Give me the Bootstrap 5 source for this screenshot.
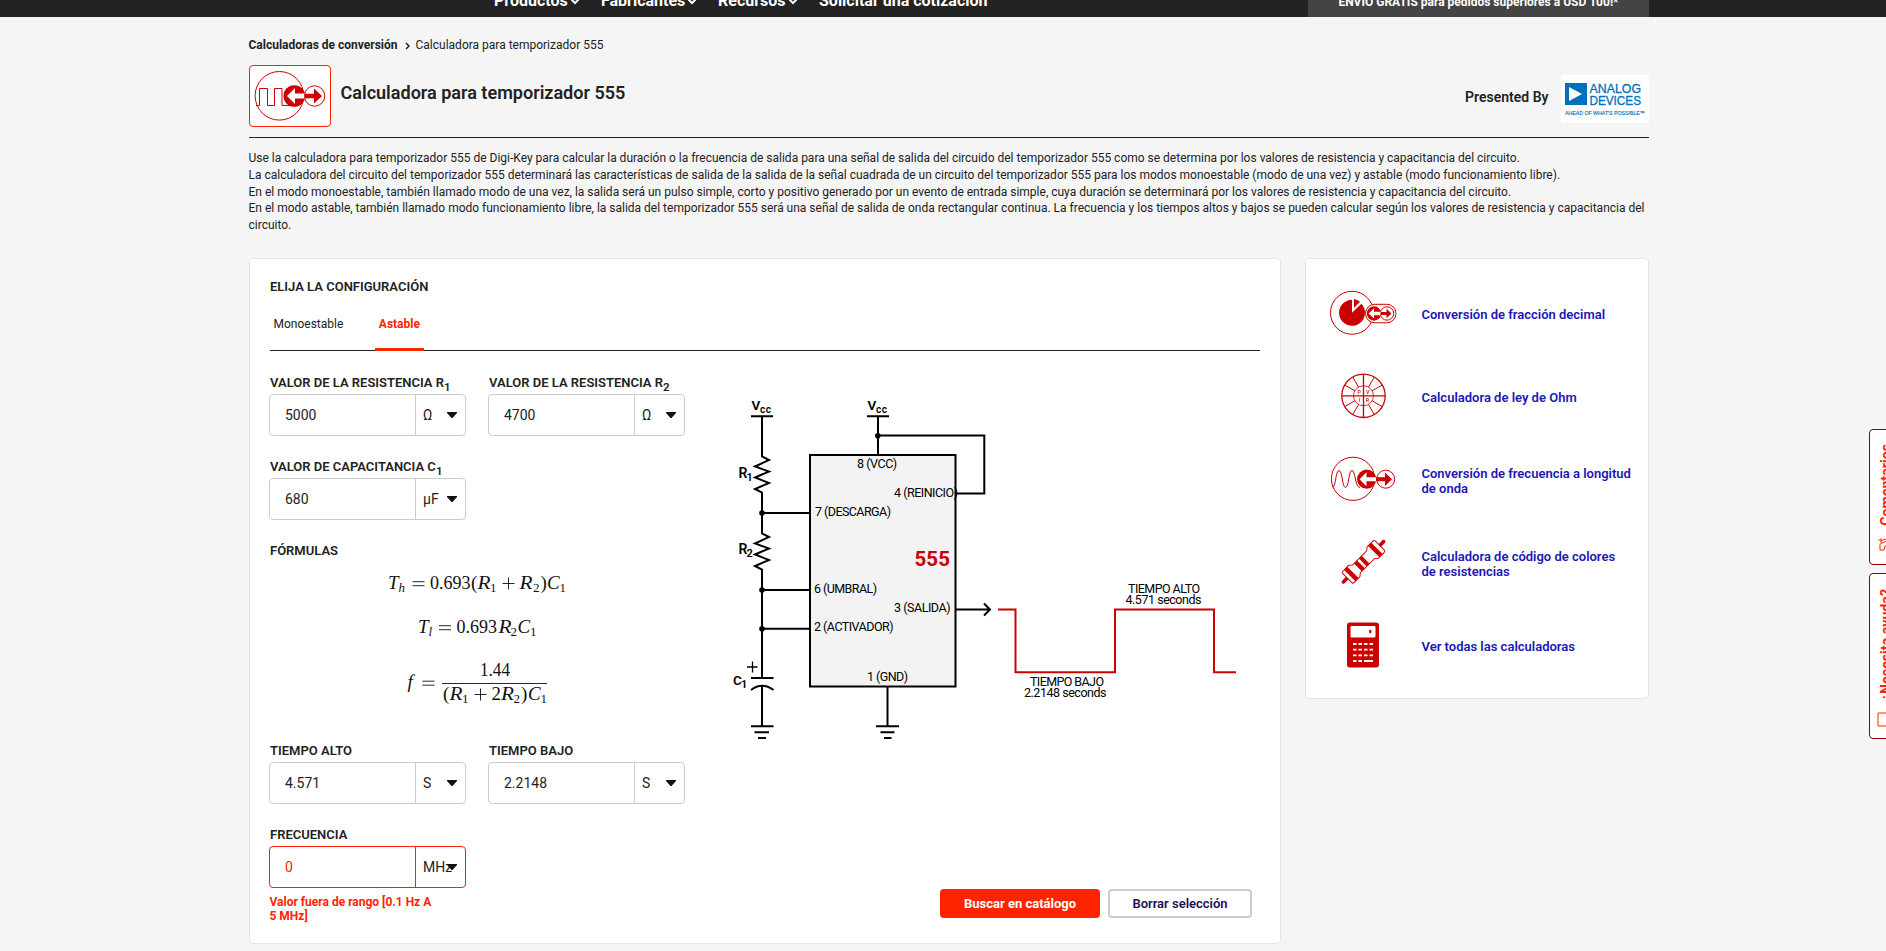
<!DOCTYPE html>
<html lang="es">
<head>
<meta charset="utf-8">
<meta name="viewport" content="width=device-width, initial-scale=1">
<title>Calculadora para temporizador 555</title>
<link href="https://cdn.jsdelivr.net/npm/bootstrap@5.3.0/dist/css/bootstrap.min.css" rel="stylesheet">
<style>
:root{--dk-red:#cc0000;--dk-alert:#ff2400;--dk-ink:#222}
body{font-family:Roboto,"Liberation Sans",sans-serif;font-size:12px;line-height:16.75px;color:var(--dk-ink);background:#f5f5f5;height:951px;overflow:hidden}
.page-width{width:1400px;margin-left:249px}
.top-nav{height:17px;background:#222;overflow:hidden}
.top-nav .menu{margin-left:245px;font-size:16px;font-weight:700;color:#fff;line-height:20px;margin-top:-9px;height:20px}
.top-nav .menu span{white-space:nowrap}
.top-nav .menu svg{margin:0 0 -1px 2px}
.promo{width:341px;height:17px;background:#444;color:#fff;font-weight:700;line-height:20px}
.promo span{display:block;margin-top:-8px}
.crumbs{height:48px;padding-top:19px;line-height:18px;margin-left:-.5px}
.crumbs svg{margin:6px 6px 0 7px}
.tool-icon{width:82px;height:62px;border:1px solid var(--dk-alert);border-radius:4px;background:#fff}
.tool-title{font-size:18.05px;font-weight:600;line-height:24px;margin:16px 0 0 9.500px}
.tool-head{height:73px;border-bottom:1px solid var(--dk-ink)}
.by{font-size:14px;font-weight:600;line-height:20px;margin:22px 12.500px 0 0}
.logo-box{width:88px;height:48px;margin-top:10px}
.intro{padding-top:12px;height:120px;margin-left:-.5px;letter-spacing:-.004px}
.panel{background:#fff;border:1px solid #e6e6e6;border-radius:4px}
.calc{width:1032px;height:686px;padding:18px 20px 0 20px}
.cap-label{font-size:13px;font-weight:600;line-height:24px;height:24px;white-space:nowrap;padding-top:1px}
.cap-label sub{font-size:11.500px;bottom:-4px;line-height:0}
.tabs{height:54px;border-bottom:1px solid var(--dk-ink)}
.tabs a{height:54px;line-height:54px;padding:0 4px;color:var(--dk-ink);text-decoration:none;margin-right:28px}
.tabs a:first-child{padding-left:3.500px;margin-right:27.500px}
.tabs a.on{color:var(--dk-alert);font-weight:700;border-bottom:3px solid var(--dk-alert)}
.left-col{width:450px;padding-top:19px}
.unit-field{width:197px}
.unit-field .box{height:42px;border:1px solid #ccc;border-radius:4px;background:#fff;font-size:14px;line-height:40px;margin-left:-1px;width:197px}
.unit-field .num{width:146px;padding-left:15px;border-right:1px solid #ccc}
.unit-field .unit{padding-left:7px;position:relative}
.unit-field .unit svg{position:absolute;right:8px;top:17px}
.unit-field.bad .box,.unit-field.bad .num{border-color:var(--dk-alert)}
.unit-field.bad .num{color:var(--dk-alert)}
.err{color:var(--dk-alert);font-weight:700;line-height:14px;margin-top:7px;width:170px;margin-left:-.5px}
.rowgap{margin-bottom:18px;column-gap:22px}
.act{height:29px;border-radius:4px;font-size:13px;font-weight:700;line-height:1;padding:0}
.act-search{width:160px;background:var(--dk-alert);color:#fff}
.act-clear{width:144px;background:#fff;border:2px solid #ccc;color:#1a1054;font-weight:600}
.more{width:344px;height:441px;padding:14px 0 0 22px}
.more a{height:83px;font-size:13px;font-weight:600;line-height:15px;color:#1b17b4;text-decoration:none}
.more a span{width:216px;margin-left:23.500px}
.side-tab{position:fixed;left:1869px;width:40px;background:#fff;border:1px solid #8b0000;border-radius:4px;color:var(--dk-alert);font-weight:700;font-size:14.2px}
.side-tab span{position:absolute;left:6px;writing-mode:vertical-rl;transform:rotate(180deg);white-space:nowrap;line-height:20px}
.side-tab svg{position:absolute;left:7px}
svg{display:block;flex:none}
.top-nav svg{display:inline-block}
</style>
</head>
<body>
<header class="top-nav">
  <div class="page-width d-flex justify-content-between">
    <div class="menu d-flex">
      <span style="width:107px">Productos<svg width="10" height="8" viewBox="0 0 10 8"><path d="M1.500 1.500 5 5 8.500 1.500" fill="none" stroke="#fff" stroke-width="2"/></svg></span>
      <span style="width:117px">Fabricantes<svg width="10" height="8" viewBox="0 0 10 8"><path d="M1.500 1.500 5 5 8.500 1.500" fill="none" stroke="#fff" stroke-width="2"/></svg></span>
      <span style="width:101px">Recursos<svg width="10" height="8" viewBox="0 0 10 8"><path d="M1.500 1.500 5 5 8.500 1.500" fill="none" stroke="#fff" stroke-width="2"/></svg></span>
      <span>Solicitar una cotización</span>
    </div>
    <div class="promo text-center"><span>ENVÍO GRATIS para pedidos superiores a USD 100!*</span></div>
  </div>
</header>

<main class="page-width">
  <nav class="crumbs d-flex"><b>Calculadoras de conversión</b>
    <svg width="5" height="8" viewBox="0 0 5 8"><path d="M1 1 4 4 1 7" fill="none" stroke="#222" stroke-width="1.500"/></svg>
    <span>Calculadora para temporizador 555</span></nav>

  <div class="tool-head d-flex">
    <div class="tool-icon">
      <svg width="80" height="60" viewBox="250 66 80 60" fill="none" stroke="#c00">
        <circle cx="279.400" cy="95.800" r="24.300"/>
        <path d="M256 105.500H259.500V88.500H267.500V105.500H274.500V88.500H282V105.500H290"/>
        <circle cx="314.600" cy="96" r="10.200"/>
        <circle cx="294.300" cy="96" r="10.800" fill="#c00" stroke="none"/>
        <path d="M287 96l8-8v5.500h9.500v5h-9.500v5.500z" fill="#fff" stroke="none"/>
        <path d="M304.500 93.800H314V88.500L322 96l-8 7.500V98.200H304.500z" fill="#c00" stroke="none"/>
      </svg>
    </div>
    <h1 class="tool-title mb-0">Calculadora para temporizador 555</h1>
    <div class="by ms-auto">Presented By</div>
    <svg class="logo-box" viewBox="0 0 88 48" font-family="Liberation Sans, sans-serif" fill="#0070bd">
      <rect width="88" height="48" fill="#fff"/><path d="M4 8h22v22H4z"/><path d="M8 12v14l13-7z" fill="#fff"/>
      <g stroke="#0070bd" stroke-width=".3"><text x="28.500" y="18.300" font-size="12.500" textLength="51.500" lengthAdjust="spacingAndGlyphs">ANALOG</text>
      <text x="28.500" y="29.700" font-size="12.500" textLength="51.500" lengthAdjust="spacingAndGlyphs">DEVICES</text></g>
      <text x="4" y="40" font-size="5.800" textLength="80" lengthAdjust="spacingAndGlyphs" stroke="#0070bd" stroke-width=".15">AHEAD OF WHAT'S POSSIBLE™</text>
    </svg>
  </div>

  <div class="intro">
    <div>Use la calculadora para temporizador 555 de Digi-Key para calcular la duración o la frecuencia de salida para una señal de salida del circuido del temporizador 555 como se determina por los valores de resistencia y capacitancia del circuito.</div>
    <div>La calculadora del circuito del temporizador 555 determinará las características de salida de la salida de la señal cuadrada de un circuito del temporizador 555 para los modos monoestable (modo de una vez) y astable (modo funcionamiento libre).</div>
    <div>En el modo monoestable, también llamado modo de una vez, la salida será un pulso simple, corto y positivo generado por un evento de entrada simple, cuya duración se determinará por los valores de resistencia y capacitancia del circuito.</div>
    <div>En el modo astable, también llamado modo funcionamiento libre, la salida del temporizador 555 será una señal de salida de onda rectangular continua. La frecuencia y los tiempos altos y bajos se pueden calcular según los valores de resistencia y capacitancia del circuito.</div>
  </div>

  <div class="d-flex align-items-start justify-content-between">
    <section class="panel calc">
      <div class="cap-label pt-0" style="height:20px;line-height:20px">ELIJA LA CONFIGURACIÓN</div>
      <nav class="tabs d-flex"><a href="#">Monoestable</a><a href="#" class="on">Astable</a></nav>
      <div class="d-flex">
        <div class="left-col flex-shrink-0">
          <div class="d-flex rowgap">
            <div class="unit-field"><div class="cap-label">VALOR DE LA RESISTENCIA R<sub>1</sub></div>
              <div class="box d-flex"><div class="num">5000</div><div class="unit flex-grow-1">Ω<svg width="10" height="6"><path d="M0 0h10v1L5.500 6h-1L0 1z" fill="#111"/></svg></div></div></div>
            <div class="unit-field"><div class="cap-label">VALOR DE LA RESISTENCIA R<sub>2</sub></div>
              <div class="box d-flex"><div class="num">4700</div><div class="unit flex-grow-1">Ω<svg width="10" height="6"><path d="M0 0h10v1L5.500 6h-1L0 1z" fill="#111"/></svg></div></div></div>
          </div>
          <div class="d-flex rowgap">
            <div class="unit-field"><div class="cap-label">VALOR DE CAPACITANCIA C<sub>1</sub></div>
              <div class="box d-flex"><div class="num">680</div><div class="unit flex-grow-1">µF<svg width="10" height="6"><path d="M0 0h10v1L5.500 6h-1L0 1z" fill="#111"/></svg></div></div></div>
          </div>
          <div class="cap-label">FÓRMULAS</div>
          <svg class="rowgap" width="416" height="158" viewBox="270 562 416 158" font-family="Liberation Serif, serif" font-size="19" fill="#111">
            <g>
              <text x="388" y="589" font-style="italic">T</text><text x="398.500" y="591.500" font-size="13" font-style="italic">h</text>
              <path d="M412.500 581.700h12M412.500 585.700h12" stroke="#111" stroke-width=".9"/>
              <text x="430" y="589" textLength="40.500" lengthAdjust="spacingAndGlyphs">0.693</text><text x="471" y="589">(</text><text x="477.500" y="589" font-style="italic" textLength="13" lengthAdjust="spacingAndGlyphs">R</text><text x="490" y="591.500" font-size="13">1</text>
              <path d="M502.500 583.500h12M508.500 577.500v12" stroke="#111" stroke-width=".9"/>
              <text x="519.500" y="589" font-style="italic" textLength="13" lengthAdjust="spacingAndGlyphs">R</text><text x="533" y="591.500" font-size="13">2</text><text x="540.500" y="589">)</text>
              <text x="547" y="589" font-style="italic">C</text><text x="559.500" y="591.500" font-size="13">1</text>
            </g>
            <g>
              <text x="418" y="633" font-style="italic">T</text><text x="428.500" y="635.500" font-size="13" font-style="italic">l</text>
              <path d="M439 625.700h12M439 629.700h12" stroke="#111" stroke-width=".9"/>
              <text x="456.500" y="633" textLength="40.500" lengthAdjust="spacingAndGlyphs">0.693</text><text x="498.500" y="633" font-style="italic" textLength="13" lengthAdjust="spacingAndGlyphs">R</text><text x="510.500" y="635.500" font-size="13">2</text>
              <text x="517.500" y="633" font-style="italic">C</text><text x="530" y="635.500" font-size="13">1</text>
            </g>
            <g>
              <text x="407.500" y="688" font-style="italic">f</text><path d="M422.500 681.200h12M422.500 685.200h12" stroke="#111" stroke-width=".9"/>
              <path d="M442 683.500H547" stroke="#111" stroke-width=".9"/>
              <text x="480" y="675.500" textLength="30" lengthAdjust="spacingAndGlyphs">1.44</text>
              <text x="443" y="700">(</text><text x="449.500" y="700" font-style="italic" textLength="13" lengthAdjust="spacingAndGlyphs">R</text><text x="462" y="702.500" font-size="13">1</text>
              <path d="M474.500 694.500h12M480.500 688.500v12" stroke="#111" stroke-width=".9"/>
              <text x="491.500" y="700">2</text><text x="501" y="700" font-style="italic" textLength="13" lengthAdjust="spacingAndGlyphs">R</text><text x="513.500" y="702.500" font-size="13">2</text><text x="521" y="700">)</text>
              <text x="528" y="700" font-style="italic">C</text><text x="540.500" y="702.500" font-size="13">1</text>
            </g>
          </svg>
          <div class="d-flex rowgap">
            <div class="unit-field"><div class="cap-label">TIEMPO ALTO</div>
              <div class="box d-flex"><div class="num">4.571</div><div class="unit flex-grow-1">S<svg width="10" height="6"><path d="M0 0h10v1L5.500 6h-1L0 1z" fill="#111"/></svg></div></div></div>
            <div class="unit-field"><div class="cap-label">TIEMPO BAJO</div>
              <div class="box d-flex"><div class="num">2.2148</div><div class="unit flex-grow-1">S<svg width="10" height="6"><path d="M0 0h10v1L5.500 6h-1L0 1z" fill="#111"/></svg></div></div></div>
          </div>
          <div class="unit-field bad"><div class="cap-label">FRECUENCIA</div>
            <div class="box d-flex"><div class="num">0</div><div class="unit flex-grow-1">MHz<svg width="10" height="6"><path d="M0 0h10v1L5.500 6h-1L0 1z" fill="#111"/></svg></div></div>
            <div class="err">Valor fuera de rango [0.1 Hz A 5 MHz]</div></div>
        </div>

        <div class="d-flex flex-column justify-content-between flex-shrink-0" style="width:540px;height:567px;padding-top:29px">
          <svg width="540" height="370" viewBox="720 380 540 370" font-size="12.500" fill="#000">
            <rect x="810" y="455" width="145.500" height="231.500" fill="#f3f3f3" stroke="#000" stroke-width="2"/>
            <g fill="none" stroke="#000" stroke-width="2">
              <path d="M751 416.300H773M762 416.300V456.500L769 460 755 466.500 769 471.500 755 477.500 769 483 755 489 762 492.500V533.500L769 537 755 543.500 769 548.500 755 554.500 769 560 755 566 762 569.500V678M751 678H773.500"/>
              <path d="M751 690Q762 681.500 773.500 690M762 686V726M751 726.300H773.500M754.500 732.200H769M758 738H766"/>
              <path d="M762 513H810M762 590H810M762 628.700H810"/>
              <path d="M867 416.300H889M878 416.300V455M878 435.500H984.300V493.500H956M887.500 687V726M876 726.300H899M880.500 732.200H894.500M884 738H891.500"/>
              <path d="M956 609.500H989M984 603.500 990 609.500 984 615.500"/>
            </g>
            <path d="M747 667H757.500M752.500 661.500V672.500" stroke="#000" stroke-width="1.300"/>
            <g><circle cx="762" cy="513" r="2.800"/><circle cx="762" cy="590" r="2.800"/><circle cx="762" cy="628.700" r="2.800"/><circle cx="877.800" cy="435.700" r="2.800"/></g>
            <path d="M998 609.500H1015.500V672.300H1115V609.500H1214V672.300H1236" fill="none" stroke="#c00" stroke-width="2"/>
            <g font-weight="600">
              <text x="751.500" y="410" font-size="13.500">V</text><text x="760" y="412.500" font-size="10" textLength="11">cc</text>
              <text x="867.500" y="410" font-size="13.500">V</text><text x="876" y="412.500" font-size="10" textLength="11">cc</text>
              <text x="738.500" y="478" font-size="14">R</text><text x="746.500" y="481" font-size="11">1</text>
              <text x="738.500" y="554" font-size="14">R</text><text x="746.500" y="557" font-size="11">2</text>
              <text x="733" y="685" font-size="13.500">C</text><text x="741" y="688" font-size="11">1</text>
            </g>
            <text x="857" y="468" textLength="40">8 (VCC)</text>
            <text x="894" y="497" textLength="64">4 (REINICIO)</text>
            <text x="815" y="516" textLength="76">7 (DESCARGA)</text>
            <text x="814" y="593" textLength="63">6 (UMBRAL)</text>
            <text x="894" y="612" textLength="56.500">3 (SALIDA)</text>
            <text x="814" y="631" textLength="79.500">2 (ACTIVADOR)</text>
            <text x="867" y="681" textLength="41">1 (GND)</text>
            <text x="914.500" y="566" font-size="20.500" font-weight="700" fill="#c00" textLength="35.500">555</text>
            <text x="1128" y="593" textLength="72">TIEMPO ALTO</text><text x="1125.500" y="604" textLength="76">4.571 seconds</text>
            <text x="1030" y="686" textLength="74">TIEMPO BAJO</text><text x="1024" y="697" textLength="82.500">2.2148 seconds</text>
          </svg>
          <div class="d-flex gap-2 justify-content-end" style="padding-right:8px">
            <button class="btn act act-search">Buscar en catálogo</button><button class="btn act act-clear">Borrar selección</button>
          </div>
        </div>
      </div>
    </section>

    <aside class="panel more">
      <a href="#" class="d-flex align-items-center">
        <svg width="70" height="50" viewBox="0 0 70 50" fill="none" stroke="#c00">
          <circle cx="24" cy="22.800" r="21.500"/>
          <rect x="37.500" y="14.300" width="30.500" height="18.500" rx="9.200" fill="#fff"/>
          <path d="M24 22.800V9.800A13 13 0 1 0 33.400 13.800z" fill="#c00" stroke="none"/><path d="M26 18V9A12 12 0 0 1 32 11.800z" fill="#c00" stroke="none"/>
          <circle cx="59" cy="23.500" r="6.700"/><circle cx="46" cy="23.500" r="7.200" fill="#c00" stroke="none"/>
          <path d="M40.500 23.500l5.500-5v3.200h7v3.600h-7v3.200z" fill="#fff" stroke="none"/><path d="M52.500 22h6v-3.300l5 4.800-5 4.800V25h-6z" fill="#c00" stroke="none"/>
        </svg><span>Conversión de fracción decimal</span></a>
      <a href="#" class="d-flex align-items-center">
        <svg width="70" height="50" viewBox="-35.500 -22.800 70 50" fill="none" stroke="#c00">
          <circle r="21.700" stroke-width="1.300"/><circle r="10" stroke-width=".8"/>
          <path d="M0-21.700V21.700M-21.700 0H21.700" stroke-width="1.300"/>
          <path d="M5-8.700 10.800-18.800M8.700-5 18.800-10.800M8.700 5 18.800 10.800M5 8.700 10.800 18.800M-5 8.700-10.800 18.800M-8.700 5-18.800 10.800M-8.700-5-18.800-10.800M-5-8.700-10.800-18.800"/>
          <g fill="#c00" stroke="none" font-size="5.300" font-weight="500"><text x="-6" y="-2">P</text><text x="2.500" y="-2">V</text><text x="-4.800" y="6">I</text><text x="2.300" y="6">R</text></g>
        </svg><span>Calculadora de ley de Ohm</span></a>
      <a href="#" class="d-flex align-items-center">
        <svg width="70" height="50" viewBox="0 0 70 50" fill="none" stroke="#c00">
          <circle cx="25" cy="22.800" r="21.600"/>
          <path d="M4.500 31C8 31 7.500 14.500 11 14.500S14 31.500 17.500 31.500 20.500 14.500 24 14.500 27 31.500 32 31.500"/>
          <circle cx="57.700" cy="23.200" r="9"/><circle cx="38.700" cy="23.200" r="9.600" fill="#c00" stroke="none"/>
          <path d="M31.500 23.200l7-7v5h9.500v4h-9.500v5z" fill="#fff" stroke="none"/><path d="M48 21.200h9v-4.700l7 6.700-7 6.700v-4.700h-9z" fill="#c00" stroke="none"/>
        </svg><span>Conversión de frecuencia a longitud<br>de onda</span></a>
      <a href="#" class="d-flex align-items-center">
        <svg width="70" height="50" viewBox="-35.500 -22.800 70 50" fill="none" stroke="#c00">
          <g transform="rotate(-45)"><path d="M-28.500 0H-23M23 0H28.500" stroke-width="3.600" stroke-linecap="round"/>
          <path d="M-23-6.500Q-23-8-21-8H-13L-10-5.500H10L13-8H21Q23-8 23-6.500V6.500Q23 8 21 8H13L10 5.500H-10L-13 8H-21Q-23 8-23 6.500z" fill="#fff"/>
          <path d="M-19.500-8h4.500V8h-4.500zM-8-5.500h4.500v11H-8zM-1-5.500h4v11H-1zM14.500-8h4.500V8h-4.500z" fill="#c00" stroke="none"/></g>
        </svg><span>Calculadora de código de colores<br>de resistencias</span></a>
      <a href="#" class="d-flex align-items-center">
        <svg width="70" height="50" viewBox="0 0 70 50">
          <rect x="19" y=".500" width="32" height="45" rx="3" fill="#c00"/><rect x="22.500" y="4" width="25" height="11.500" rx="1" fill="#fff"/><ellipse cx="42.300" cy="9.500" rx="1.200" ry="2" fill="#c00"/>
          <path d="M25 22h3.500m2 0h3.500m2 0h3.500m2 0h3.500M25 27.700h3.500m2 0h3.500m2 0h3.500m2 0h3.500M25 33.300h3.500m2 0h3.500m2 0h3.500m2 0h3.500M25 39h3.500m2 0h3.500m2 0h9" stroke="#fff" stroke-width="1.800"/>
        </svg><span>Ver todas las calculadoras</span></a>
    </aside>
  </div>
</main>

<div class="side-tab" style="top:429px;height:136px"><span style="top:14px">Comentarios</span>
  <svg style="top:107px" width="16" height="16" viewBox="0 0 16 16" fill="none" stroke="#ff2400"><path d="M1.500 3H4M4 1.500V6.500L12 3V-1M4 3.500 9 2M3 6.500V13M3 13h4l1-4 6-1"/></svg></div>
<div class="side-tab" style="top:573px;height:166px"><span style="top:15px">¿Necesita ayuda?</span>
  <svg style="top:138px" width="16" height="16" viewBox="0 0 16 16" fill="none" stroke="#ff2400"><path d="M1 1h20v13H1z"/></svg></div>
<script src="https://cdn.jsdelivr.net/npm/bootstrap@5.3.0/dist/js/bootstrap.bundle.min.js"></script>
</body>
</html>
